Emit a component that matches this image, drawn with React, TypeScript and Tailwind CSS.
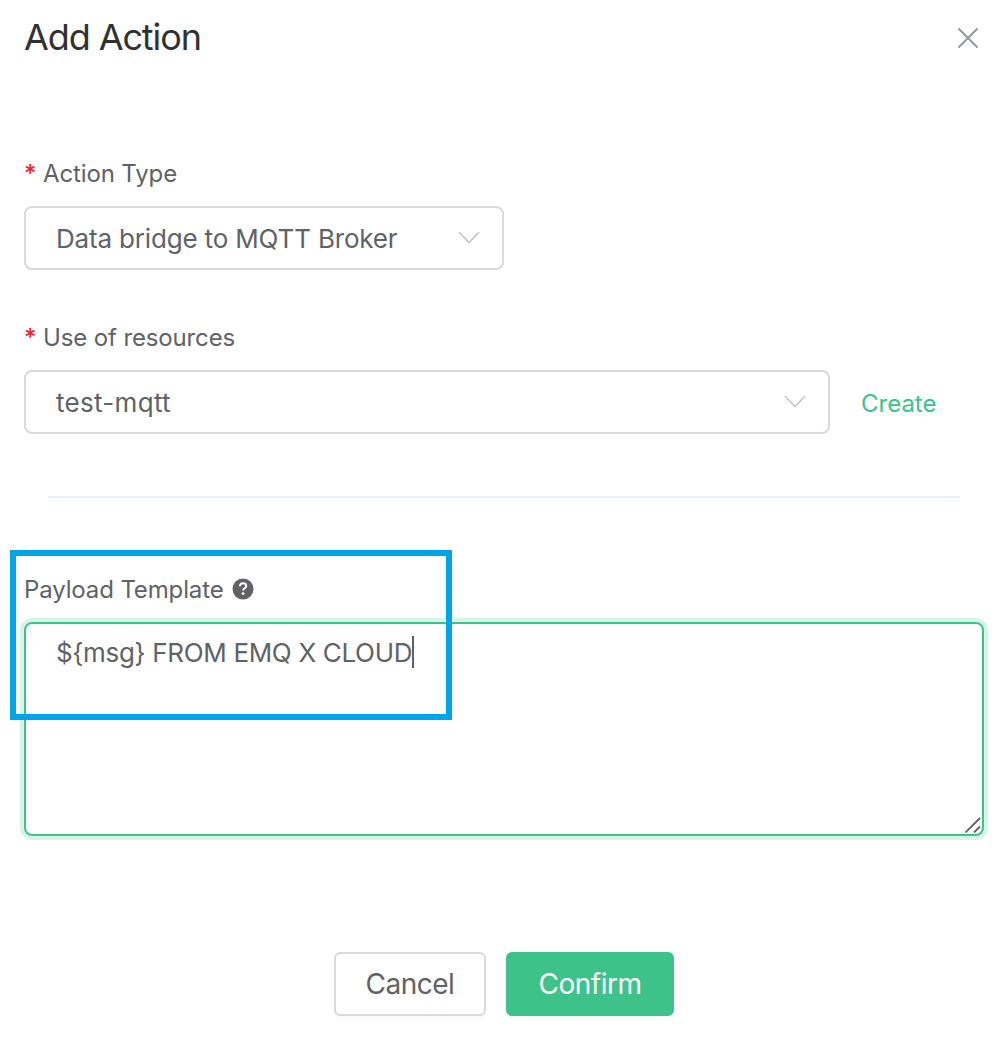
import React from "react";

function Label({ children, required = false }: { children: React.ReactNode; required?: boolean }) {
  return (
    <div className="flex h-8 items-center text-[24px] leading-8 tracking-[-0.13px] whitespace-nowrap">
      {required && <span className="w-[19px] shrink-0 text-[24px] leading-8 font-medium tracking-normal text-[#f5222d]">*</span>}
      {children}
    </div>
  );
}

function Select({ value, className }: { value: string; className: string }) {
  return (
    <div
      className={`flex h-16 items-center justify-between rounded-lg border-2 border-[#d9d9d9] pr-[22px] pl-[30px] text-[26px] whitespace-nowrap ${className}`}
    >
      <span>{value}</span>
      <svg width="22" height="14" viewBox="0 0 22 14" fill="none" stroke="#c0c4cc" strokeWidth="1.6" strokeLinecap="round">
        <path d="M1.3 1.5L11 11.6L20.7 1.5" />
      </svg>
    </div>
  );
}

export default function App() {
  return (
    <div className="relative flex h-[1038px] w-[1008px] flex-col overflow-hidden bg-white px-6 font-['Inter',sans-serif] text-[#606266]">
      <header className="flex h-[75px] items-center justify-between pr-[5px]">
        <h1 className="mb-0.5 text-[36px] leading-[48px] tracking-[-1.1px] whitespace-nowrap text-[#303133]">Add Action</h1>
        <svg width="22" height="22" viewBox="0 0 22 22" stroke="#909399" strokeWidth="1.8" strokeLinecap="round">
          <path d="M2 2L20 20M20 2L2 20" />
        </svg>
      </header>

      <section className="mt-[83px]">
        <Label required>Action Type</Label>
        <Select value="Data bridge to MQTT Broker" className="mt-4 w-[480px] tracking-[-0.17px]" />
      </section>

      <section className="mt-[52px]">
        <Label required>Use of resources</Label>
        <div className="mt-4 flex items-center">
          <Select value="test-mqtt" className="w-[806px] tracking-[0.3px]" />
          <a className="mt-[3px] ml-[31px] text-[24px]/8 text-[#3dc38a]">Create</a>
        </div>
      </section>

      <hr className="mx-6 mt-[62px] border-t-2 border-[#ebeef5]" />

      <section className="mt-[76px]">
        <Label>
          <span>Payload Template</span>
          <svg className="mb-0.5 ml-2" width="22" height="22" viewBox="0 0 22 22">
            <circle cx="11" cy="11" r="10.5" fill="#606266" />
            <path d="M7.9 8.3C8 6.4 9.3 5.3 11.1 5.3C12.9 5.3 14.2 6.4 14.2 8C14.2 10.2 11.1 10.2 11.1 12.5" fill="none" stroke="#fff" strokeWidth="2" />
            <circle cx="11.1" cy="15.6" r="1.4" fill="#fff" />
          </svg>
        </Label>
        <div className="relative mt-4 flex h-[214px] items-start rounded-lg border-2 border-[#3dc38a] pt-3 pl-[30px] text-[26px] shadow-[0_0_0_4px_#d8f3e8]">
          <span className="leading-[34px] tracking-[-0.33px] whitespace-nowrap">{"${msg} FROM EMQ X CLOUD"}</span>
          <span className="h-8 w-0.5 bg-[#606266]" />
          <svg className="absolute right-px bottom-px" width="16" height="16" viewBox="0 0 16 16" stroke="#606266" strokeWidth="1.8">
            <path d="M0.5 15.5L15 1M9 15.5L15 9.5" />
          </svg>
        </div>
      </section>

      <footer className="mt-[116px] flex justify-center gap-5 text-[28px] tracking-[-0.5px]">
        <button className="h-16 w-[152px] rounded-md border-2 border-[#d9d9d9] bg-white shadow-[0_4px_0_rgba(0,0,0,0.015)]">Cancel</button>
        <button className="h-16 w-[168px] rounded-md bg-[#3dc38a] text-white shadow-[0_4px_0_rgba(0,0,0,0.015)]">Confirm</button>
      </footer>

      <div className="pointer-events-none absolute top-[550px] left-[10px] h-[170px] w-[442px] border-6 border-[#00a4e8]" />
    </div>
  );
}
